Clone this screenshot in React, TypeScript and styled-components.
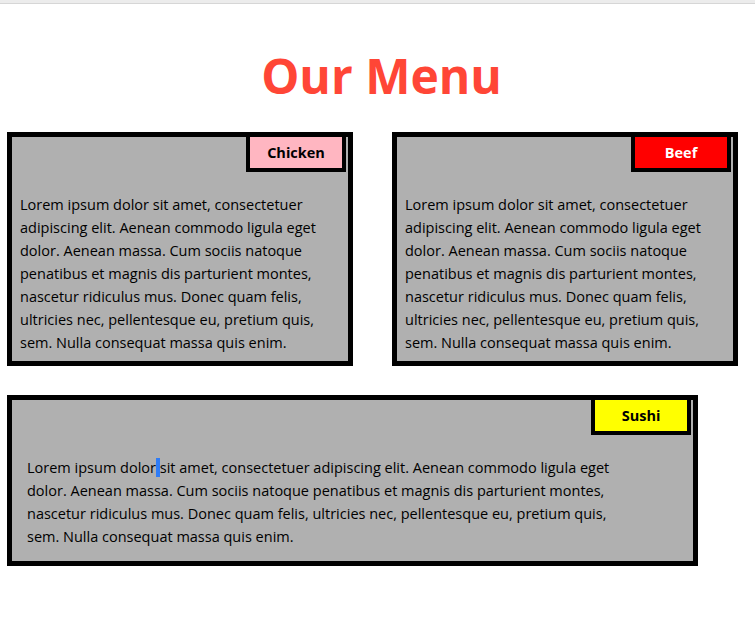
import React from "react";
import styled, { createGlobalStyle } from "styled-components";

const GlobalStyle = createGlobalStyle`
  html, body {
    margin: 0;
    padding: 0;
    background: #ffffff;
  }
  body {
    font-family: "Open Sans", "Liberation Sans", sans-serif;
    color: #000;
  }
`;

const TopStrip = styled.div`
  height: 3px;
  background: #ececec;
  border-bottom: 1px solid #d6d6d6;
`;

const Page = styled.main`
  display: flex;
  flex-direction: column;
  padding: 0 7px;
`;

const Title = styled.h1`
  margin: 42px 0 26px;
  text-align: center;
  padding-left: 8px;
  font-size: 48px;
  line-height: 60px;
  font-weight: 700;
  color: #ff4636;
`;

const Row = styled.div`
  display: flex;
  gap: 39px;
  margin-bottom: 29px;
`;

const Card = styled.section<{ $width: number; $height: number; $padLeft: number; $padRight: number }>`
  box-sizing: border-box;
  width: ${(p) => p.$width}px;
  height: ${(p) => p.$height}px;
  display: flex;
  flex-direction: column;
  background: #b0b0b0;
  border: 5px solid #000;
  padding: 0 ${(p) => p.$padRight}px 0 ${(p) => p.$padLeft}px;
`;

const Label = styled.div<{ $bg: string; $fg: string; $offset: number }>`
  box-sizing: border-box;
  align-self: flex-end;
  width: 100px;
  height: 39px;
  margin: -4px ${(p) => 2 - p.$offset}px 0 0;
  border: 4px solid #000;
  background: ${(p) => p.$bg};
  color: ${(p) => p.$fg};
  display: flex;
  align-items: center;
  justify-content: center;
  font-size: 14.5px;
  font-weight: 700;
`;

const Body = styled.p`
  margin: 21px 0 0;
  font-size: 14.5px;
  line-height: 23px;
`;

const Highlight = styled.span`
  background: #2f7cf6;
`;

const LOREM =
  "Lorem ipsum dolor sit amet, consectetuer adipiscing elit. Aenean commodo ligula eget dolor. Aenean massa. Cum sociis natoque penatibus et magnis dis parturient montes, nascetur ridiculus mus. Donec quam felis, ultricies nec, pellentesque eu, pretium quis, sem. Nulla consequat massa quis enim.";

const SUSHI_REST =
  "sit amet, consectetuer adipiscing elit. Aenean commodo ligula eget dolor. Aenean massa. Cum sociis natoque penatibus et magnis dis parturient montes, nascetur ridiculus mus. Donec quam felis, ultricies nec, pellentesque eu, pretium quis, sem. Nulla consequat massa quis enim.";

export default function App() {
  return (
    <>
      <GlobalStyle />
      <TopStrip />
      <Page>
        <Title>Our Menu</Title>
        <Row>
          <Card $width={346} $height={234} $padLeft={8} $padRight={8}>
            <Label $bg="#ffb6c1" $fg="#000" $offset={8}>Chicken</Label>
            <Body>{LOREM}</Body>
          </Card>
          <Card $width={346} $height={234} $padLeft={8} $padRight={8}>
            <Label $bg="#ff0000" $fg="#fff" $offset={8}>Beef</Label>
            <Body>{LOREM}</Body>
          </Card>
        </Row>
        <Card $width={691} $height={171} $padLeft={15} $padRight={51}>
          <Label $bg="#ffff00" $fg="#000" $offset={51}>Sushi</Label>
          <Body>
            Lorem ipsum dolor<Highlight> </Highlight>
            {SUSHI_REST}
          </Body>
        </Card>
      </Page>
    </>
  );
}
